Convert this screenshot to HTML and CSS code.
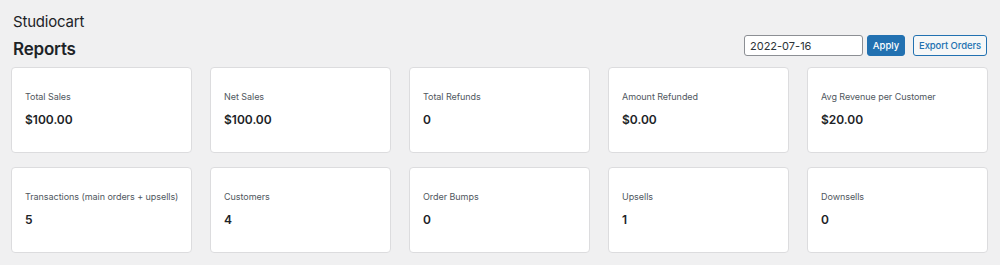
FILE: index.html
```html
<!DOCTYPE html>
<html lang="en">
<head>
    <meta charset="UTF-8">
    <title>Reports - Studiocart</title>
    <meta name="viewport" content="width=device-width">
    <link rel="stylesheet" href="styles.css">
</head>
<body>
    <div class="wrap">
        <div class="brand">Studiocart</div>
        <div class="head-row">
            <h1>Reports</h1>
            <form class="filter" action="#" method="get">
                <input type="text" class="date-input" value="2022-07-16" name="date">
                <button type="submit" class="btn btn-primary">Apply</button>
                <button type="button" class="btn btn-secondary">Export Orders</button>
            </form>
        </div>

        <div class="stats">
            <div class="stat-card">
                <div class="stat-label">Total Sales</div>
                <div class="stat-value">$100.00</div>
            </div>
            <div class="stat-card">
                <div class="stat-label">Net Sales</div>
                <div class="stat-value">$100.00</div>
            </div>
            <div class="stat-card">
                <div class="stat-label">Total Refunds</div>
                <div class="stat-value">0</div>
            </div>
            <div class="stat-card">
                <div class="stat-label">Amount Refunded</div>
                <div class="stat-value">$0.00</div>
            </div>
            <div class="stat-card">
                <div class="stat-label">Avg Revenue per Customer</div>
                <div class="stat-value">$20.00</div>
            </div>
            <div class="stat-card">
                <div class="stat-label">Transactions (main orders + upsells)</div>
                <div class="stat-value">5</div>
            </div>
            <div class="stat-card">
                <div class="stat-label">Customers</div>
                <div class="stat-value">4</div>
            </div>
            <div class="stat-card">
                <div class="stat-label">Order Bumps</div>
                <div class="stat-value">0</div>
            </div>
            <div class="stat-card">
                <div class="stat-label">Upsells</div>
                <div class="stat-value">1</div>
            </div>
            <div class="stat-card">
                <div class="stat-label">Downsells</div>
                <div class="stat-value">0</div>
            </div>
        </div>
    </div>
</body>
</html>
```

FILE: styles.css
```css
*,
*::after,
*::before{
    padding: 0;
    margin: 0;
    box-sizing: border-box;
}
html{
    font: normal 13px/1.4 Inter, "Liberation Sans", sans-serif;
    color: #1d2327;
    background-color: #f0f0f1;
}
body{
    margin: 0;
}
.wrap{
    padding: 12px 12px 0 11px;
}
.brand{
    font-size: 15px;
    line-height: 20px;
    padding-left: 2px;
    letter-spacing: -0.2px;
    margin-bottom: 5px;
}
.head-row{
    display: flex;
    justify-content: space-between;
    align-items: flex-start;
    margin-bottom: 6px;
}
h1{
    font-size: 17px;
    font-weight: 600;
    line-height: 24px;
    padding-left: 2px;
    letter-spacing: -0.2px;
}
.filter{
    display: flex;
    align-items: center;
    gap: 4px;
    margin-top: -2px;
    margin-right: 1px;
}
.date-input{
    font: inherit;
    font-size: 11px;
    width: 119px;
    height: 21px;
    padding: 0 5px;
    border: 1px solid #8c8f94;
    border-radius: 3px;
    color: #2c3338;
    background: #fff;
}
.btn{
    font: inherit;
    font-size: 9.5px;
    font-weight: 500;
    height: 21px;
    padding: 0;
    border-radius: 3px;
    cursor: pointer;
}
.btn-primary{
    width: 38px;
    background-color: #2271b1;
    border: 1px solid #2271b1;
    color: #fff;
}
.btn-secondary{
    width: 74px;
    background-color: #f6f7f7;
    border: 1px solid #2271b1;
    color: #2271b1;
    margin-left: 4px;
    letter-spacing: -0.1px;
}
.stats{
    display: grid;
    grid-template-columns: repeat(5, minmax(0, 1fr));
    gap: 14px 18px;
}
.stat-card{
    background: #fff;
    border: 1px solid #dcdcde;
    border-radius: 4px;
    height: 86px;
    padding: 23px 13px 0;
}
.stat-label{
    font-size: 9px;
    line-height: 12px;
    color: #50575e;
    white-space: nowrap;
    letter-spacing: -0.05px;
}
.stat-value{
    font-size: 12px;
    font-weight: 600;
    line-height: 16px;
    margin-top: 9px;
}
```
